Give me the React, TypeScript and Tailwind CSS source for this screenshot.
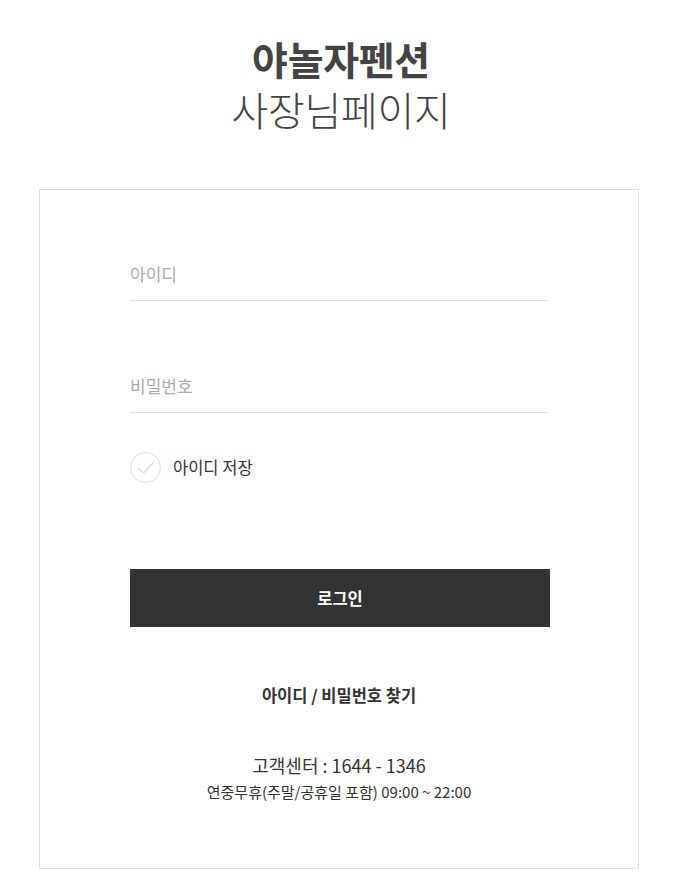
import React, { useState } from 'react';

const font = { fontFamily: '"Noto Sans CJK KR", "Noto Sans", sans-serif' };

const App: React.FC = () => {
  const [saveId, setSaveId] = useState(false);

  return (
    <div className="min-h-[884px] bg-white text-[#333]" style={font}>
      <div className="pt-[33px] text-center text-[#444]">
        <h1 className="text-[39px] leading-[50px] font-bold tracking-[-0.3px] pl-[8px]">야놀자펜션</h1>
        <p className="text-[40px] leading-[52px] font-light tracking-[-0.3px] pl-[8px]">사장님페이지</p>
      </div>

      <div className="ml-[39px] mt-[54px] w-[600px] h-[680px] border border-[#ddd] px-[90px] pt-[64px]">
        <input
          type="text"
          placeholder="아이디"
          className="block w-[418px] h-[47px] pb-[8px] border-b border-[#ddd] text-[17px] outline-none placeholder:text-[#aaa]"
        />
        <input
          type="password"
          placeholder="비밀번호"
          className="block w-[418px] h-[47px] pb-[8px] mt-[65px] border-b border-[#ddd] text-[17px] outline-none placeholder:text-[#aaa]"
        />

        <label className="flex items-center mt-[39px] cursor-pointer select-none">
          <span
            onClick={() => setSaveId(v => !v)}
            className={`w-[31px] h-[31px] rounded-full border flex items-center justify-center ${saveId ? 'border-[#333] bg-[#333]' : 'border-[#ddd] bg-white'}`}
          >
            <svg width="18" height="14" viewBox="0 0 18 14" fill="none">
              <path d="M1.5 7.5 L6.5 12 L16.5 1.5" stroke={saveId ? '#fff' : '#ddd'} strokeWidth="1.6" strokeLinecap="round" strokeLinejoin="round" />
            </svg>
          </span>
          <span className="ml-[12px] text-[16.5px] text-[#333]">아이디 저장</span>
        </label>

        <button className="block w-[420px] h-[58px] mt-[86px] bg-[#333] text-white text-[16.5px] font-bold">로그인</button>

        <p className="mt-[58px] text-center text-[16.5px] leading-[20px] font-bold text-[#333]">아이디 / 비밀번호 찾기</p>

        <p className="mt-[48px] text-center text-[18px] leading-[24px] text-[#333]">고객센터 : 1644 - 1346</p>
        <p className="mt-[5px] text-center text-[15px] leading-[20px] text-[#333]">연중무휴(주말/공휴일 포함) 09:00 ~ 22:00</p>
      </div>
    </div>
  );
};

export default App;
